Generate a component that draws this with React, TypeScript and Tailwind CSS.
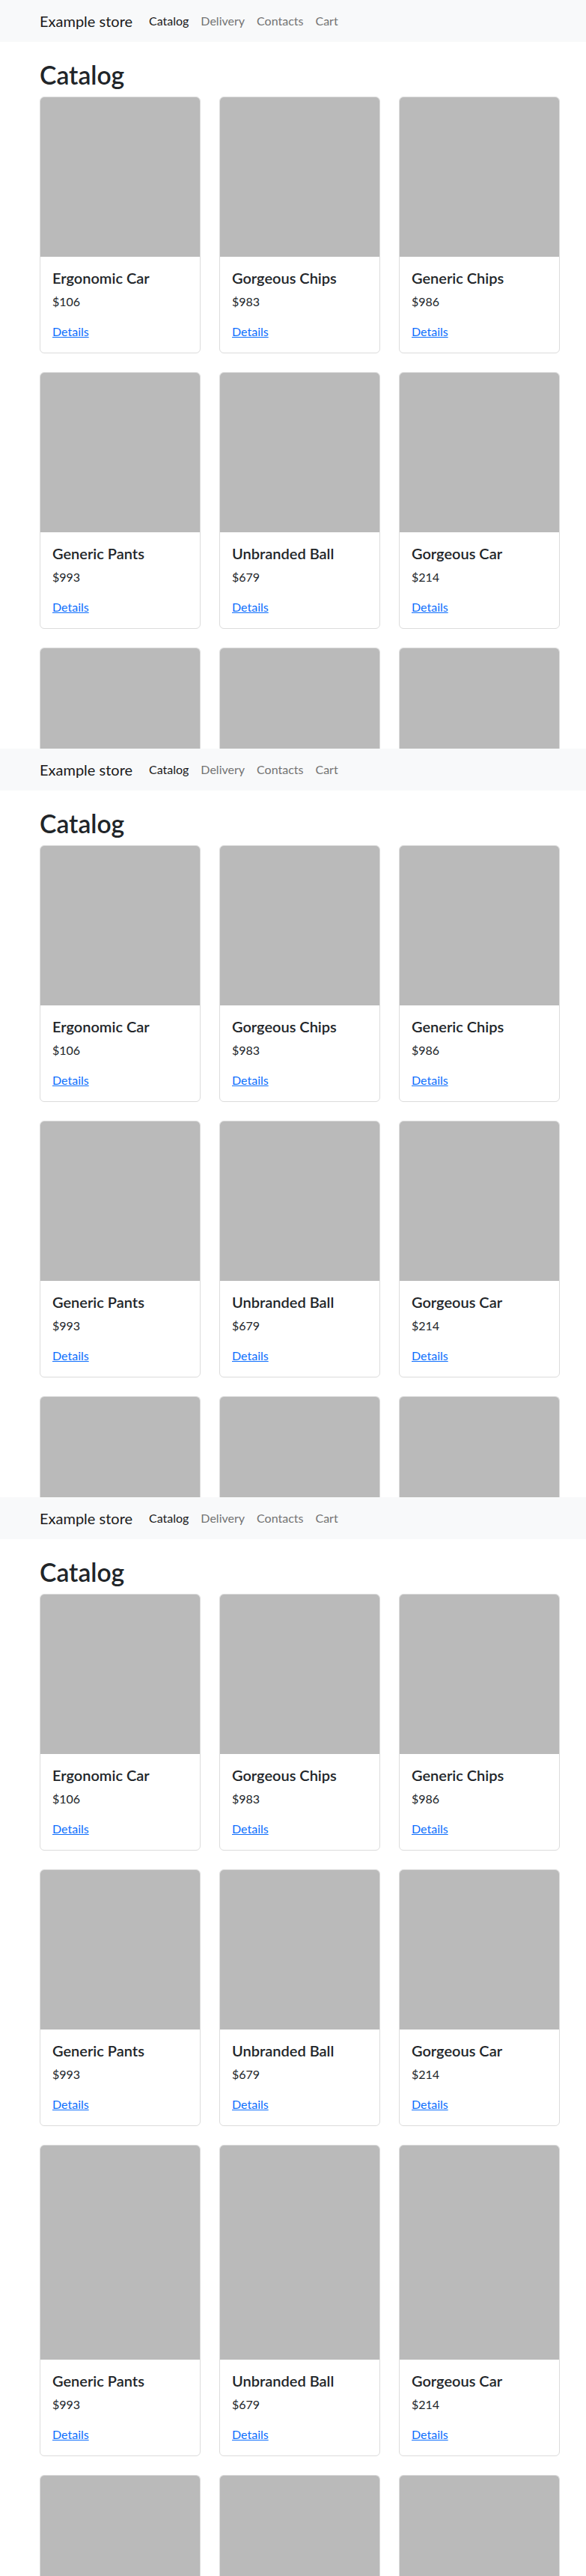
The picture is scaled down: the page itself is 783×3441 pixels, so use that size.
import React from "react";

type Product = { name: string; price: number };

const rowA: Product[] = [
  { name: "Ergonomic Car", price: 106 },
  { name: "Gorgeous Chips", price: 983 },
  { name: "Generic Chips", price: 986 },
];

const rowB: Product[] = [
  { name: "Generic Pants", price: 993 },
  { name: "Unbranded Ball", price: 679 },
  { name: "Gorgeous Car", price: 214 },
];

const links = ["Catalog", "Delivery", "Contacts", "Cart"];

function Navbar() {
  return (
    <nav className="h-14 bg-[#f8f9fa] flex items-center pl-[53px]">
      <span className="text-[20px] leading-[30px] text-[#1a1a1a] w-[138px] shrink-0 whitespace-nowrap">Example store</span>
      <ul className="flex items-center">
        {links.map((l, i) => (
          <li key={l}>
            <span className={`px-2 text-base leading-6 ${i === 0 ? "text-[#1a1a1a]" : "text-[#737373]"}`}>{l}</span>
          </li>
        ))}
      </ul>
    </nav>
  );
}

function Card({ item, imgClass }: { item: Product; imgClass: string }) {
  return (
    <div className="border border-[#dcdcdc] rounded-[6px] overflow-hidden bg-white flex flex-col">
      <div className={`bg-[#bababa] ${imgClass}`} />
      <div className="p-4">
        <h5 className="text-[20px] leading-6 font-semibold text-[#212529] mb-2">{item.name}</h5>
        <p className="text-base leading-6 text-[#212529] mb-4">${item.price}</p>
        <a href="#" className="text-base leading-6 text-[#0d6efd] underline">Details</a>
      </div>
    </div>
  );
}

// cards below the fold: only the picture part shows before the cut
function CutCard() {
  return (
    <div className="border border-b-0 border-[#dcdcdc] rounded-t-[6px] overflow-hidden bg-white">
      <div className="bg-[#bababa] h-[213px]" />
    </div>
  );
}

function Row({ items, imgClass }: { items: Product[]; imgClass: string }) {
  return (
    <>
      {items.map((p, i) => (
        <Card key={i} item={p} imgClass={imgClass} />
      ))}
    </>
  );
}

function Segment({ heightClass, last }: { heightClass: string; last?: boolean }) {
  return (
    <section className={`${heightClass} overflow-hidden`}>
      <Navbar />
      <div className="pl-[53px]">
        <h1 className="mt-6 mb-[9px] text-[33.7px] leading-[40px] font-semibold text-[#212529]">Catalog</h1>
        <div className="grid grid-cols-3 gap-[25px] w-[695px] items-start">
          <Row items={rowA} imgClass="h-[213px]" />
          <Row items={rowB} imgClass="h-[213px]" />
          {last && <Row items={rowB} imgClass="h-[286px]" />}
          <CutCard />
          <CutCard />
          <CutCard />
        </div>
      </div>
    </section>
  );
}

export default function App() {
  return (
    <div className="bg-white w-[783px] font-['Lato','Liberation_Sans',sans-serif]">
      <Segment heightClass="h-[1000px]" />
      <Segment heightClass="h-[1000px]" />
      <Segment heightClass="h-[1441px]" last />
    </div>
  );
}
